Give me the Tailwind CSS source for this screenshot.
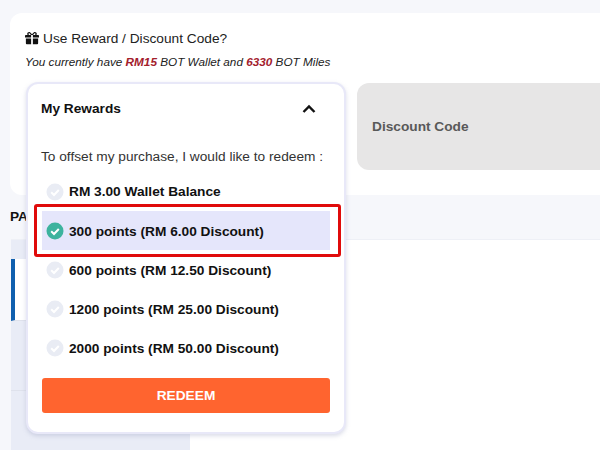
<!DOCTYPE html>
<html>
<head>
<meta charset="utf-8">
<script src="https://cdn.jsdelivr.net/npm/@tailwindcss/browser@4"></script>
</head>
<body class="m-0 overflow-hidden bg-[#f6f7fb]">
<div class="relative h-[450px] w-[600px] overflow-hidden bg-[#f6f7fb] font-['Liberation_Sans',Arial,sans-serif] text-[#111]">
  <div class="ml-[10px] mt-[13px] h-[182px] rounded-l-xl bg-white pl-[15px] pt-[17px]">
    <div class="flex h-[16px] items-center gap-[4px] text-[13.7px] leading-none text-[#222]">
      <svg class="h-[14px] w-[14px]" viewBox="0 0 512 512" fill="#111"><path d="M32 272h192v208H64a32 32 0 0 1-32-32zM288 272h192v176a32 32 0 0 1-32 32H288zM480 144h-62c10-12 14-26 14-40 0-44-34-72-70-72-30 0-52 14-106 90-54-76-76-90-106-90-36 0-70 28-70 72 0 14 4 28 14 40H32a32 32 0 0 0-32 32v64h224v-96h64v96h224v-64a32 32 0 0 0-32-32zM150 144c-14 0-24-14-24-32 0-16 10-32 26-32 14 0 26 8 62 64zm212 0h-64c36-56 48-64 62-64 16 0 26 16 26 32 0 18-10 32-24 32z"/></svg>
      <span class="pt-[2px]">Use Reward / Discount Code?</span>
    </div>
    <p class="mt-[9px] text-[11.75px] italic leading-[14px] text-[#222]">You currently have <b class="text-[#a3202c]">RM15</b> BOT Wallet and <b class="text-[#a3202c]">6330</b> BOT Miles</p>
    <div class="ml-[332px] mt-[14px] flex h-[87px] items-center rounded-l-xl bg-[#e7e6e6] pl-[15px] pt-[2px]">
      <span class="text-[13.7px] font-bold text-[#595959]">Discount Code</span>
    </div>
  </div>
  <div class="flex h-[44px] items-center pl-[10px]">
    <span class="text-[13.7px] font-bold">PAYMENT</span>
  </div>
  <div class="ml-[11px] flex h-[211px] border-t border-[#eef0f6] bg-white">
    <div class="flex w-[179px] flex-col bg-[#e9ecf6]">
      <div class="h-[19px]"></div>
      <div class="h-[62px] border-b border-[#dfe2ec] border-l-[4px] border-l-[#0f5fae] bg-white"></div>
      <div class="h-[70px] border-b border-[#dfe2ec]"></div>
    </div>
  </div>

  <div class="absolute left-[26px] top-[82px] h-[352px] w-[320px] rounded-xl border-2 border-[#e8e8f8] bg-white shadow-[0_2px_4px_rgba(150,155,190,0.35)]">
    <div class="flex h-[48px] items-center justify-between pl-[13px] pr-[28px] pt-[1px]">
      <span class="pt-[1px] text-[13.7px] font-bold">My Rewards</span>
      <svg class="h-[10px] w-[14px]" viewBox="0 0 14 10" fill="none" stroke="#111" stroke-width="2.4"><path d="M1.5 8 7 2.5 12.5 8"/></svg>
    </div>
    <p class="mt-[17px] pl-[13px] text-[13.7px] leading-[16px] text-[#333]">To offset my purchase, I would like to redeem :</p>
    <div class="mt-[7px] flex flex-col px-[14px]">
      <div class="flex h-[39px] items-center gap-[5px] pl-[4px] pt-[1px] text-[13.7px] font-bold">
        <svg class="h-[18px] w-[18px]" viewBox="0 0 18 18"><circle cx="9" cy="9" r="8.5" fill="#e9ecf4"/><path d="M5.2 9.3 8 12l4.8-5" fill="none" stroke="#fff" stroke-width="2"/></svg>
        <span>RM 3.00 Wallet Balance</span>
      </div>
      <div class="flex h-[39px] items-center gap-[5px] bg-[#e5e6fb] pl-[4px] pt-[1px] text-[13.7px] font-bold">
        <svg class="h-[18px] w-[18px]" viewBox="0 0 18 18"><circle cx="9" cy="9" r="8.5" fill="#3db39e"/><path d="M5.2 9.3 8 12l4.8-5" fill="none" stroke="#fff" stroke-width="2"/></svg>
        <span class="pt-[3px]">300 points (RM 6.00 Discount)</span>
      </div>
      <div class="flex h-[39px] items-center gap-[5px] pl-[4px] pt-[1px] text-[13.7px] font-bold">
        <svg class="h-[18px] w-[18px]" viewBox="0 0 18 18"><circle cx="9" cy="9" r="8.5" fill="#e9ecf4"/><path d="M5.2 9.3 8 12l4.8-5" fill="none" stroke="#fff" stroke-width="2"/></svg>
        <span class="pt-[3px]">600 points (RM 12.50 Discount)</span>
      </div>
      <div class="flex h-[39px] items-center gap-[5px] pl-[4px] pt-[1px] text-[13.7px] font-bold">
        <svg class="h-[18px] w-[18px]" viewBox="0 0 18 18"><circle cx="9" cy="9" r="8.5" fill="#e9ecf4"/><path d="M5.2 9.3 8 12l4.8-5" fill="none" stroke="#fff" stroke-width="2"/></svg>
        <span class="pt-[3px]">1200 points (RM 25.00 Discount)</span>
      </div>
      <div class="flex h-[39px] items-center gap-[5px] pl-[4px] pt-[1px] text-[13.7px] font-bold">
        <svg class="h-[18px] w-[18px]" viewBox="0 0 18 18"><circle cx="9" cy="9" r="8.5" fill="#e9ecf4"/><path d="M5.2 9.3 8 12l4.8-5" fill="none" stroke="#fff" stroke-width="2"/></svg>
        <span class="pt-[3px]">2000 points (RM 50.00 Discount)</span>
      </div>
    </div>
    <div class="mx-[14px] mt-[11px] flex h-[35px] items-center justify-center rounded-[3px] bg-[#ff642f] pt-[2px] text-[13.7px] font-bold text-white">REDEEM</div>
  </div>
  <div class="absolute left-[34px] top-[204px] h-[53px] w-[307px] rounded-[3px] border-[3px] border-[#e00b0b]"></div>
</div>
</body>
</html>
